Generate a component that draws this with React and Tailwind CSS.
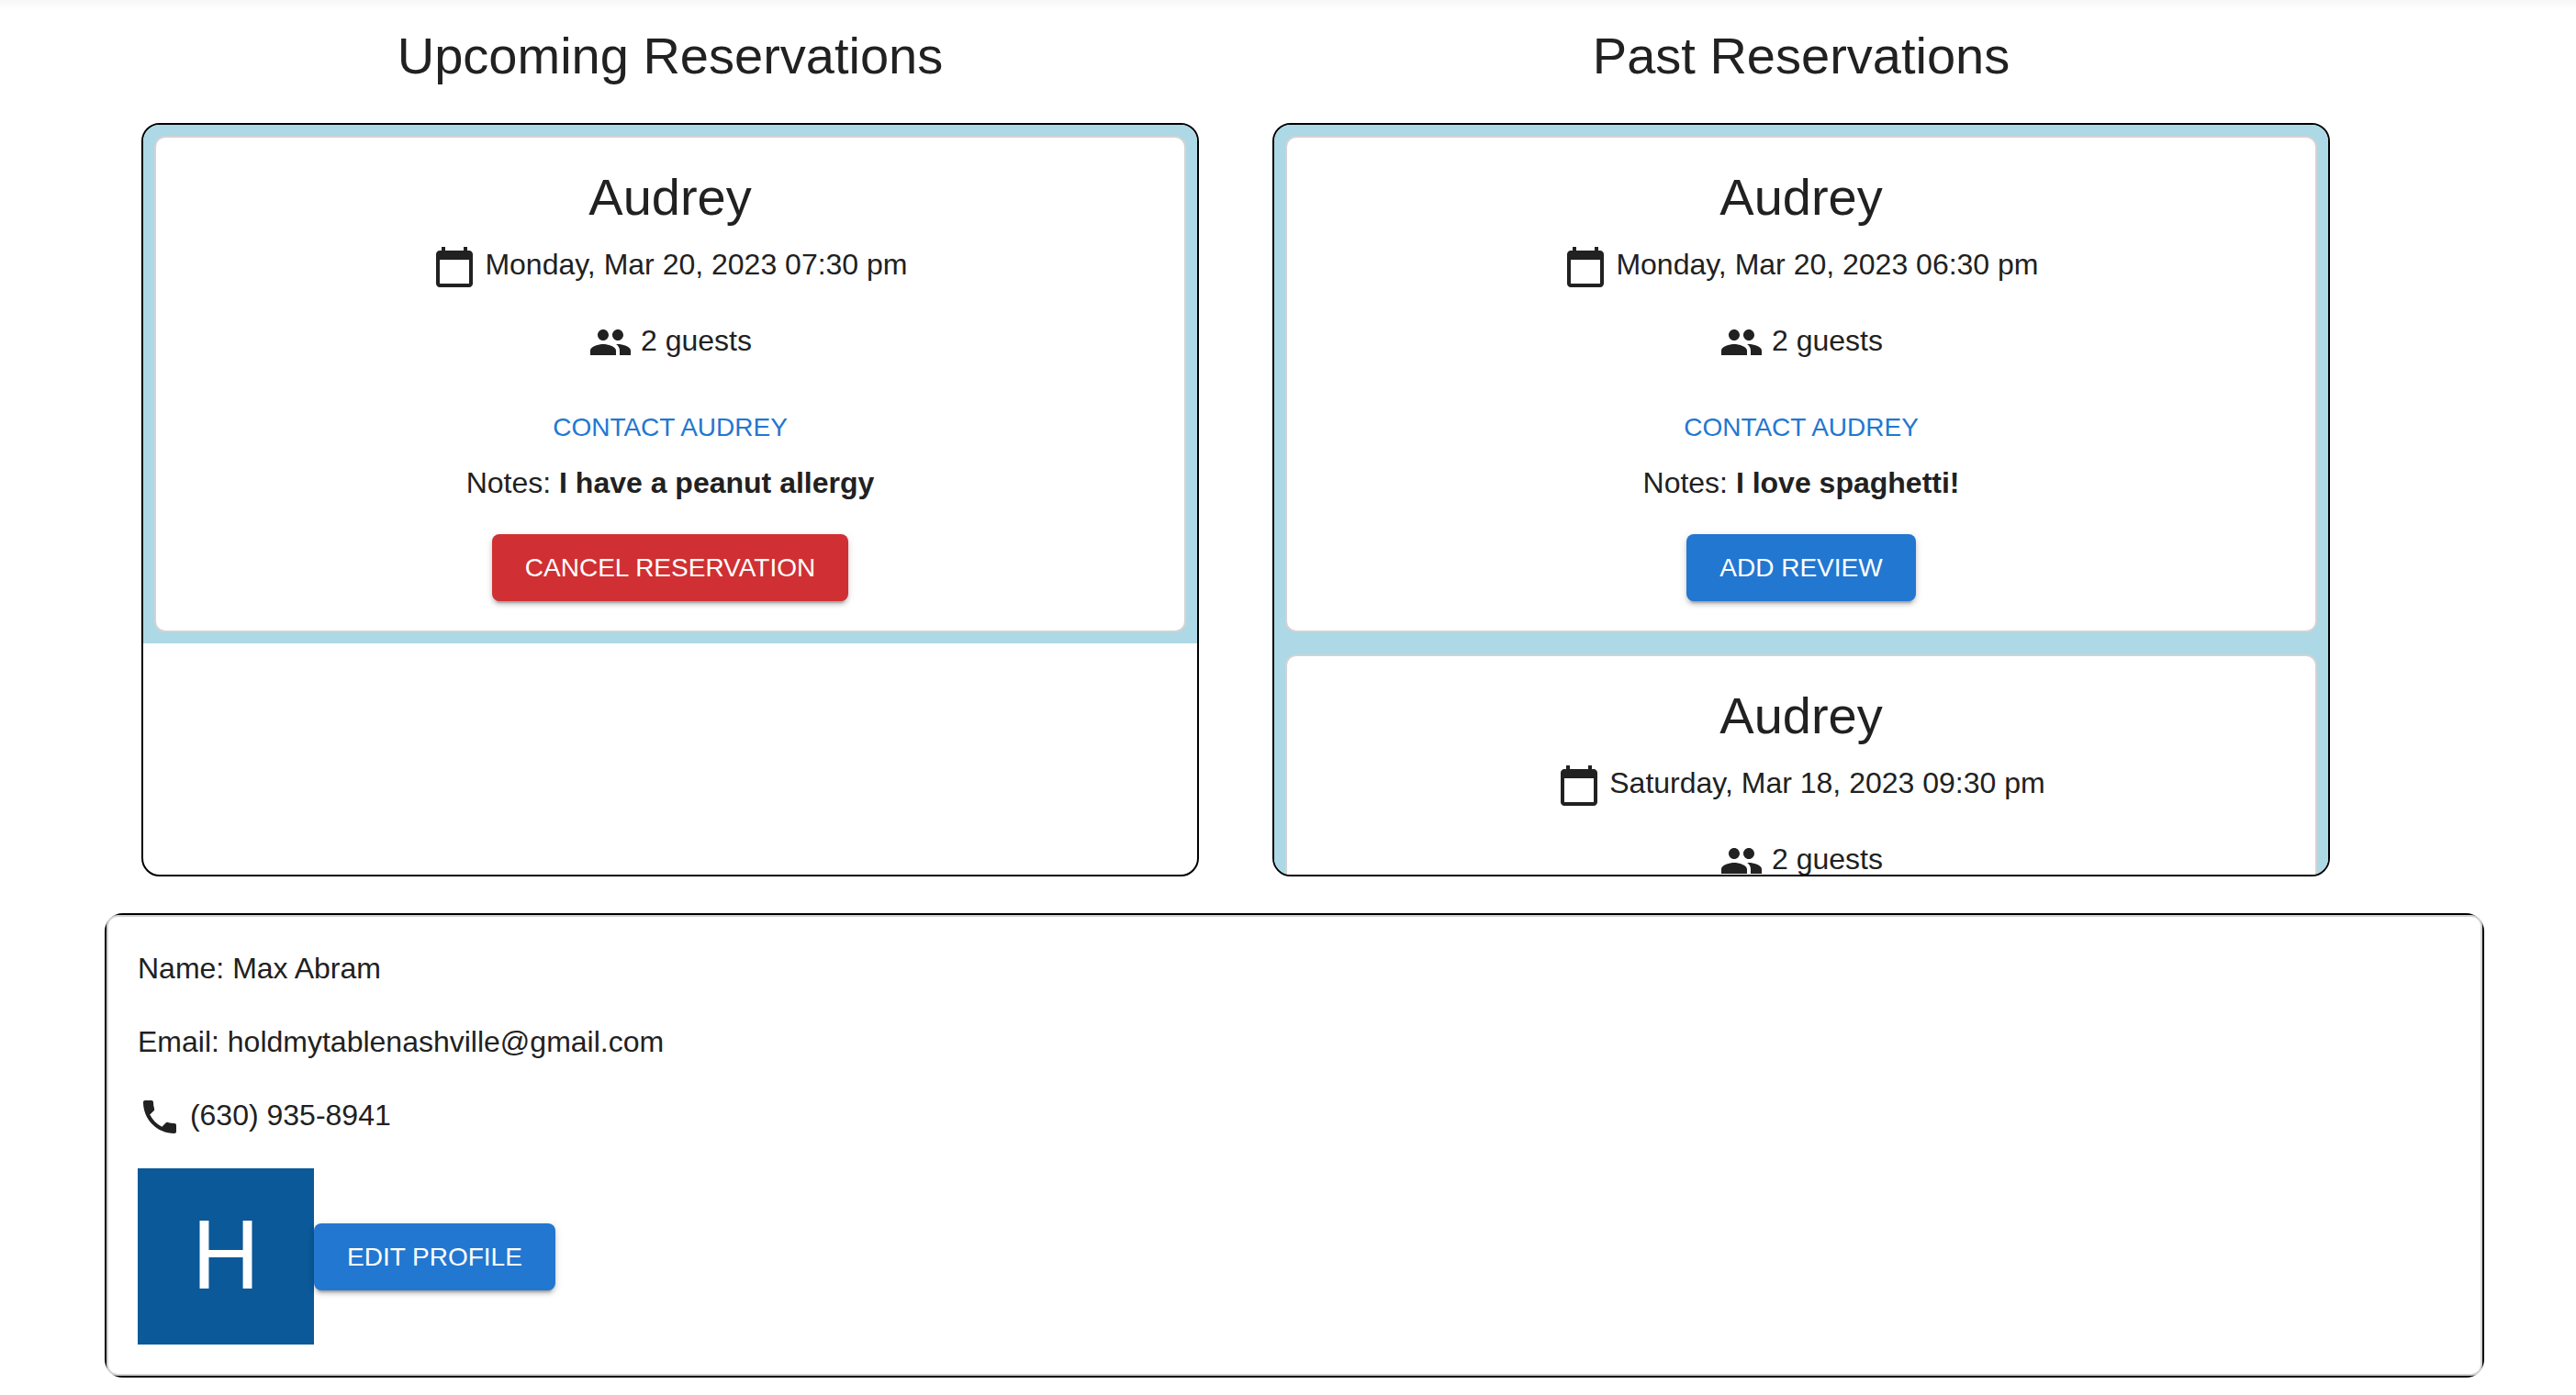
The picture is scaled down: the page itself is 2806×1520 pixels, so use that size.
import React from "react";
import { MdCalendarToday, MdGroup, MdPhone } from "react-icons/md";

const upcoming = [
  { id: 1, host: "Audrey", date: "Monday, Mar 20, 2023 07:30 pm", guests: 2, notes: "I have a peanut allergy" },
];

const past = [
  { id: 2, host: "Audrey", date: "Monday, Mar 20, 2023 06:30 pm", guests: 2, notes: "I love spaghetti!" },
  { id: 3, host: "Audrey", date: "Saturday, Mar 18, 2023 09:30 pm", guests: 2 },
];

const raised =
  "rounded-lg px-9 py-3 text-[28px] leading-[49px] text-white uppercase shadow-[0_6px_2px_-4px_rgba(0,0,0,0.2),0_4px_4px_0_rgba(0,0,0,0.14),0_2px_10px_0_rgba(0,0,0,0.12)]";

function ReservationCard({ reservation, action, actionColor }) {
  return (
    <div className="bg-[#add8e6] p-3">
      <article className="flex flex-col items-center rounded-xl border-2 border-[#d3d3d3] bg-white p-8 text-center">
        <h3 className="mb-4 text-[56px] leading-[66px]">{reservation.host}</h3>
        <p className="mb-8">
          <MdCalendarToday className="inline size-12 align-middle" /> {reservation.date}
        </p>
        <p className="mb-8">
          <MdGroup className="inline size-12 align-middle" /> {reservation.guests} guests
        </p>
        {reservation.notes && (
          <>
            <button type="button" className="px-4 py-3 text-[28px] leading-[49px] text-[#2277d1] uppercase">
              Contact {reservation.host}
            </button>
            <p className="mb-8">
              Notes: <strong className="font-bold">{reservation.notes}</strong>
            </p>
            <button type="button" className={`${raised} ${actionColor}`}>
              {action}
            </button>
          </>
        )}
      </article>
    </div>
  );
}

function ReservationColumn({ title, reservations, action, actionColor }) {
  return (
    <section className="min-w-0 flex-1">
      <h2 className="mb-10 text-center text-[56px] leading-[66px]">{title}</h2>
      <div className="h-[54vh] overflow-y-auto rounded-[20px] border-2 border-black [scrollbar-width:none]">
        {reservations.map((r) => (
          <ReservationCard key={r.id} reservation={r} action={action} actionColor={actionColor} />
        ))}
      </div>
    </section>
  );
}

export default function App() {
  return (
    <div className="min-h-screen bg-white font-['Liberation_Sans',Arial,sans-serif] text-[32px] leading-[48px] text-[#212121]">
      <div className="h-3 bg-linear-to-b from-[#f7f7f7] to-white" />
      <main className="mr-[100px] ml-[114px] pt-4">
        <div className="mr-42 ml-10 flex gap-20">
          <ReservationColumn title="Upcoming Reservations" reservations={upcoming} action="Cancel Reservation" actionColor="bg-[#d03033]" />
          <ReservationColumn title="Past Reservations" reservations={past} action="Add Review" actionColor="bg-[#2277d1]" />
        </div>
        <section className="mt-10 rounded-[20px] border-2 border-black">
          <div className="rounded-xl border-2 border-[#d3d3d3] bg-white p-8">
            <p className="mb-8">Name: Max Abram</p>
            <p className="mb-8">Email: holdmytablenashville@gmail.com</p>
            <p className="mb-8">
              <MdPhone className="inline size-12 align-middle" /> (630) 935-8941
            </p>
            <div className="flex items-center">
              <div className="flex size-48 items-center justify-center bg-[#0b5999] font-[Roboto,sans-serif] text-[104px] leading-none text-white">
                H
              </div>
              <button type="button" className={`${raised} bg-[#2277d1]`}>
                Edit Profile
              </button>
            </div>
          </div>
        </section>
      </main>
    </div>
  );
}
